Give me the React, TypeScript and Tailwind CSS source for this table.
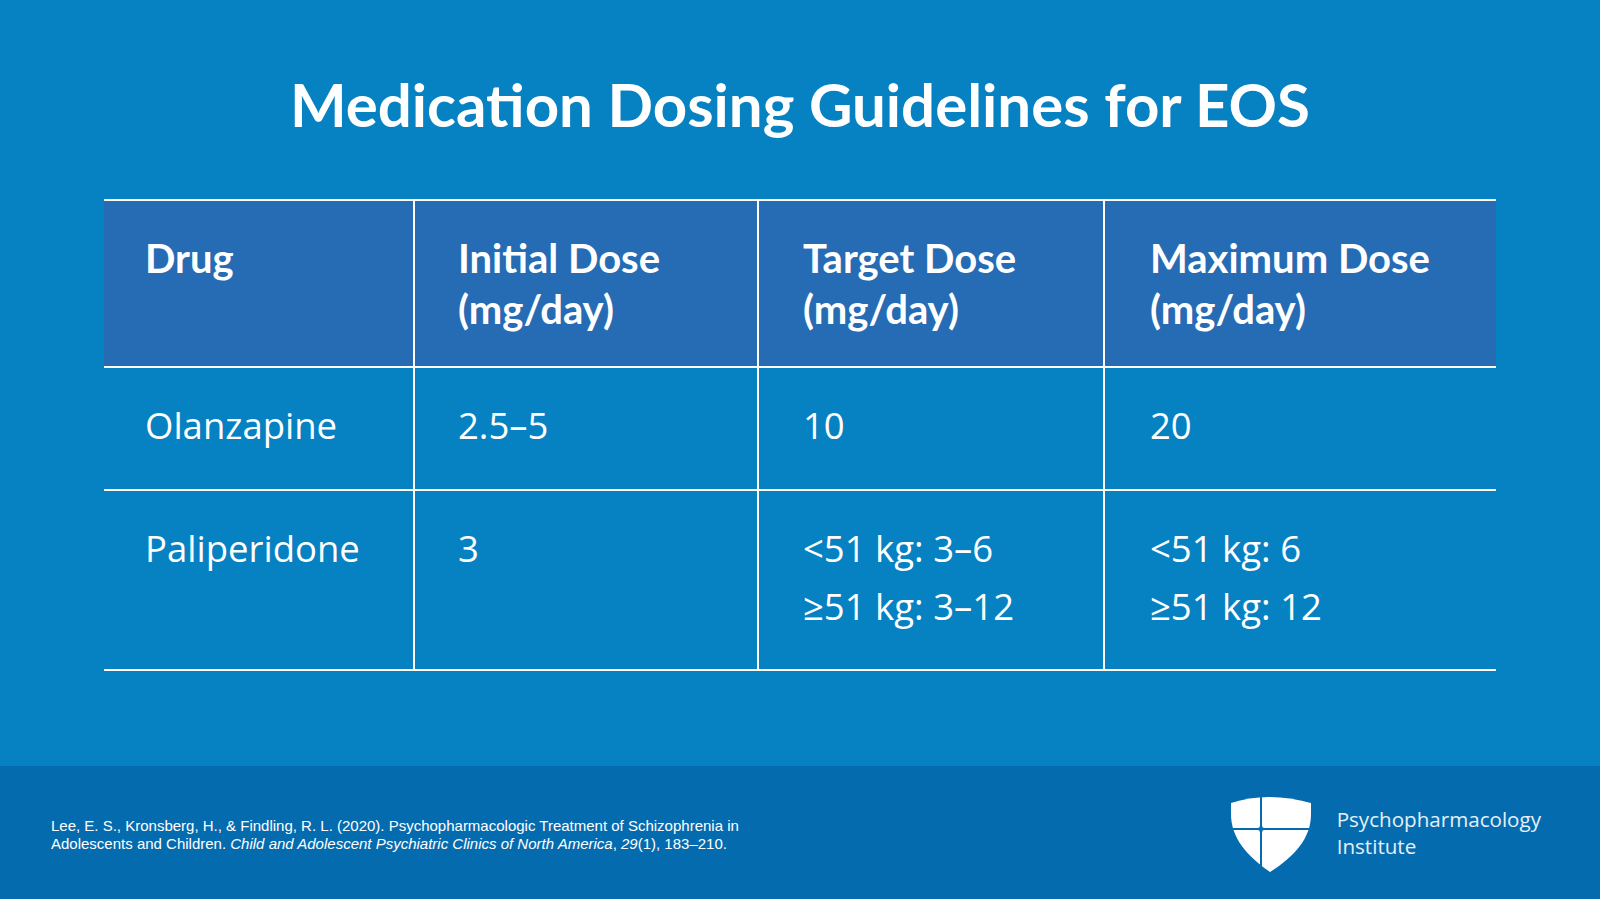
const headers = [
  ["Drug"],
  ["Initial Dose", "(mg/day)"],
  ["Target Dose", "(mg/day)"],
  ["Maximum Dose", "(mg/day)"],
];

const rows = [
  { h: "h-[121px] pt-[28px]", cells: [["Olanzapine"], ["2.5–5"], ["10"], ["20"]] },
  {
    h: "h-[178px] pt-[28px]",
    cells: [["Paliperidone"], ["3"], ["<51 kg: 3–6", "≥51 kg: 3–12"], ["<51 kg: 6", "≥51 kg: 12"]],
  },
];

const colPad = ["pl-[41px]", "pl-[43px]", "pl-[44px]", "pl-[45px]"];

function Shield() {
  return (
    <svg viewBox="0 0 80 78" className="w-[80px] h-[78px]">
      <path d="M0 9 Q36 -3 80 9 L80 20 C80 44 64 62 39 78 C16 62 0 44 0 20 Z" fill="#ffffff" />
      <path d="M30 0 V78 M0 35 H80" stroke="#046baf" strokeWidth="2" />
      <polygon points="30,28 31.6,33.4 37,35 31.6,36.6 30,42 28.4,36.6 23,35 28.4,33.4" fill="#046baf" />
    </svg>
  );
}

export default function App() {
  return (
    <div className="w-[1600px] h-[899px] bg-[#0681c2] flex flex-col overflow-hidden">
      <h1 className="pt-[74px] text-center text-white text-[60px] leading-none font-bold font-['Lato',sans-serif]">
        Medication Dosing Guidelines for EOS
      </h1>

      {/* table */}
      <div className="mt-[65px] mx-[104px] border-t-2 border-white">
        <div className="grid grid-cols-[309px_344px_346px_392px] bg-[#266cb4] border-b-2 border-white h-[167px]">
          {headers.map((lines, i) => (
            <div
              key={i}
              className={`${colPad[i]} pt-[32px] ${i > 0 ? "border-l-2 border-white" : ""} text-white text-[40px] leading-[51px] font-bold font-['Lato',sans-serif]`}
            >
              {lines.map((l) => (
                <div key={l}>{l}</div>
              ))}
            </div>
          ))}
        </div>
        {rows.map((row, r) => (
          <div key={r} className="grid grid-cols-[309px_344px_346px_392px] border-b-2 border-white">
            {row.cells.map((lines, i) => (
              <div
                key={i}
                className={`${row.h} ${colPad[i]} ${i > 0 ? "border-l-2 border-white" : ""} text-white text-[36.5px] leading-[58px] font-['Open_Sans',sans-serif]`}
              >
                {lines.map((l) => (
                  <div key={l}>{l}</div>
                ))}
              </div>
            ))}
          </div>
        ))}
      </div>

      {/* footer */}
      <footer className="mt-auto h-[133px] bg-[#046baf] flex items-center justify-between pl-[51px] pr-[59px]">
        <p className="pt-[4px] text-white text-[15px] leading-[18px] font-['Liberation_Sans',Arial,sans-serif]">
          Lee, E. S., Kronsberg, H., &amp; Findling, R. L. (2020). Psychopharmacologic Treatment of Schizophrenia in
          <br />
          Adolescents and Children. <i>Child and Adolescent Psychiatric Clinics of North America</i>, <i>29</i>(1), 183–210.
        </p>
        <div className="flex items-center gap-[26px]">
          <Shield />
          <div className="text-white/90 text-[20.6px] leading-[27px] font-['Open_Sans',sans-serif]">
            <div>Psychopharmacology</div>
            <div>Institute</div>
          </div>
        </div>
      </footer>
    </div>
  );
}
